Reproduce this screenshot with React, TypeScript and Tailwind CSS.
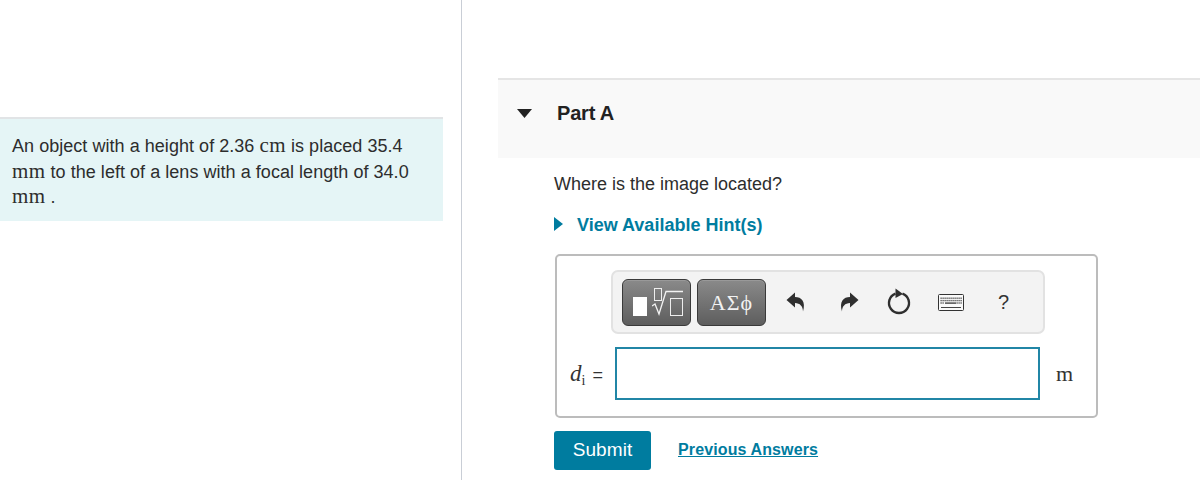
const sans = "font-['Liberation_Sans','Arial',sans-serif]";
const serif = "font-['Liberation_Serif','Times_New_Roman',serif]";

function Mm({ children }: { children: string }) {
  return <span className={`${serif} text-[21px] tracking-[0.4px]`}>{children}</span>;
}

function Undo({ flip }: { flip?: boolean }) {
  return (
    <svg width="20" height="20" viewBox="0 0 20 20" className={flip ? "-scale-x-100" : ""}>
      <path d="M0.5 8 L9 0.5 V5 C15.5 5 20 9.5 17 19.5 C17 14.5 14 11 9 11 V15.5 Z" fill="#2f2f2f" />
    </svg>
  );
}

function Keyboard() {
  const keys = [];
  for (let r = 0; r < 3; r++) {
    for (let c = 0; c < 11; c++) {
      if (r === 2 && c > 1 && c < 8) continue;
      keys.push(<rect key={`${r}-${c}`} x={2.5 + c * 2} y={3.5 + r * 2.4} width="1.2" height="1.4" fill="#444" />);
    }
  }
  return (
    <svg width="26" height="17" viewBox="0 0 26 17">
      <rect x="0.5" y="0.5" width="25" height="16" rx="1" fill="#fafafa" stroke="#333" />
      {keys}
      <rect x="7" y="8.4" width="11" height="1.4" fill="#444" />
      <rect x="3" y="13" width="20" height="1" fill="#444" />
    </svg>
  );
}

export default function App() {
  return (
    <div className={`${sans} flex h-[480px] w-[1200px] overflow-hidden bg-white text-[#2d2d2d]`}>
      <div className="h-full w-[462px] shrink-0 border-r border-[#c9ced6] pt-[117px]">
        <div className="h-[104px] w-[443px] border-t-2 border-[#e1e4e6] bg-[#e5f5f6] pl-[12px] pt-[14px] text-[18px] leading-[24.5px] tracking-[0.04px]">
          <div>
            An object with a height of 2.36 <Mm>cm</Mm> is placed 35.4
          </div>
          <div>
            <Mm>mm</Mm> to the left of a lens with a focal length of 34.0
          </div>
          <div>
            <Mm>mm</Mm> .
          </div>
        </div>
      </div>

      <div className="min-w-0 flex-1 pl-[36px] pt-[78px]">
        <div className="flex h-[80px] items-start border-t-2 border-[#e5e5e5] bg-[#f9f9f9] pl-[19px] pt-[20px]">
          <svg width="15" height="9" viewBox="0 0 15 9" className="mt-[9px]">
            <path d="M0 0 H15 L7.5 9 Z" fill="#222" />
          </svg>
          <div className="ml-[25px] text-[20px] font-bold leading-[26px] tracking-[-0.2px] text-[#222]">Part A</div>
        </div>

        <div className="pl-[56px]">
          <div className="mt-[13px] text-[18px] leading-[26px]">Where is the image located?</div>
          <div className="mt-[15px] flex h-[26px] items-center text-[18px] font-bold text-[#007c9f]">
            <svg width="9" height="14" viewBox="0 0 9 14" className="mb-[2px]">
              <path d="M0 0 L9 7 L0 14 Z" fill="#007c9f" />
            </svg>
            <span className="ml-[14px]">View Available Hint(s)</span>
          </div>

          <div className="ml-[1px] mt-[16px] h-[164px] w-[543px] rounded-[5px] border-2 border-[#bcbcbc] bg-white">
            <div className="ml-[54px] mt-[14px] flex h-[64px] w-[434px] items-center rounded-[7px] border-2 border-[#e2e2e2] bg-[#f3f3f3] pl-[9px]">
              <div className="flex h-[47px] w-[69px] items-center gap-[5px] rounded-[6px] border border-[#3a3a3a] bg-gradient-to-b from-[#8a8a8a] to-[#5e5e5e] pl-[10px] shadow-[inset_0_1px_0_#999]">
                <div className="mt-[9px] h-[19px] w-[14px] shrink-0 bg-white" />
                <svg width="32" height="30" viewBox="0 0 32 30" className="shrink-0">
                  <rect x="2.5" y="1.5" width="7" height="12" fill="none" stroke="#eee" />
                  <path d="M0 19 L3 17 L7 27 L14 4.5 H31" fill="none" stroke="#f2f2f2" strokeWidth="1.3" />
                  <rect x="18.5" y="11.5" width="12" height="17" fill="none" stroke="#eee" />
                </svg>
              </div>
              <div className={`${serif} ml-[6px] flex h-[47px] w-[69px] items-center justify-center rounded-[6px] border border-[#3a3a3a] bg-gradient-to-b from-[#8a8a8a] to-[#5e5e5e] text-[22px] tracking-[1px] text-[#f2f2f2] shadow-[inset_0_1px_0_#999]`}>
                ΑΣϕ
              </div>
              <div className="ml-[20px]"><Undo /></div>
              <div className="ml-[33px]"><Undo flip /></div>
              <svg width="28" height="28" viewBox="0 0 28 28" className="ml-[26px]">
                <path d="M10.5 5.6 A10 10 0 1 0 17.5 5.6" fill="none" stroke="#2f2f2f" strokeWidth="2.4" />
                <path d="M10.5 0.5 L18 6 L10.5 10 Z" fill="#2f2f2f" />
              </svg>
              <div className="ml-[25px]"><Keyboard /></div>
              <div className="ml-[34px] text-[20px] leading-none text-[#333]">?</div>
            </div>

            <div className="mt-[12px] flex h-[54px] items-center">
              <div className={`${serif} ml-[13px] w-[45px] whitespace-nowrap text-[23px] leading-none text-[#333]`}>
                <i>d</i>
                <span className="relative top-[4px] text-[14px]">i</span>
                <span className={`${sans} ml-[7px] text-[18px]`}>=</span>
              </div>
              <div className="h-[53px] w-[425px] border-2 border-[#2186a6] bg-white" />
              <div className={`${serif} ml-[16px] text-[22px] text-[#333]`}>m</div>
            </div>
          </div>

          <div className="mt-[13px] flex items-center">
            <div className="flex h-[39px] w-[97px] items-center justify-center rounded-[3px] bg-[#007c9f] text-[19px] tracking-[0.1px] text-white">Submit</div>
            <div className="mb-[1px] ml-[27px] text-[16px] font-bold tracking-[0.12px] text-[#007c9f] underline">Previous Answers</div>
          </div>
        </div>
      </div>
    </div>
  );
}
